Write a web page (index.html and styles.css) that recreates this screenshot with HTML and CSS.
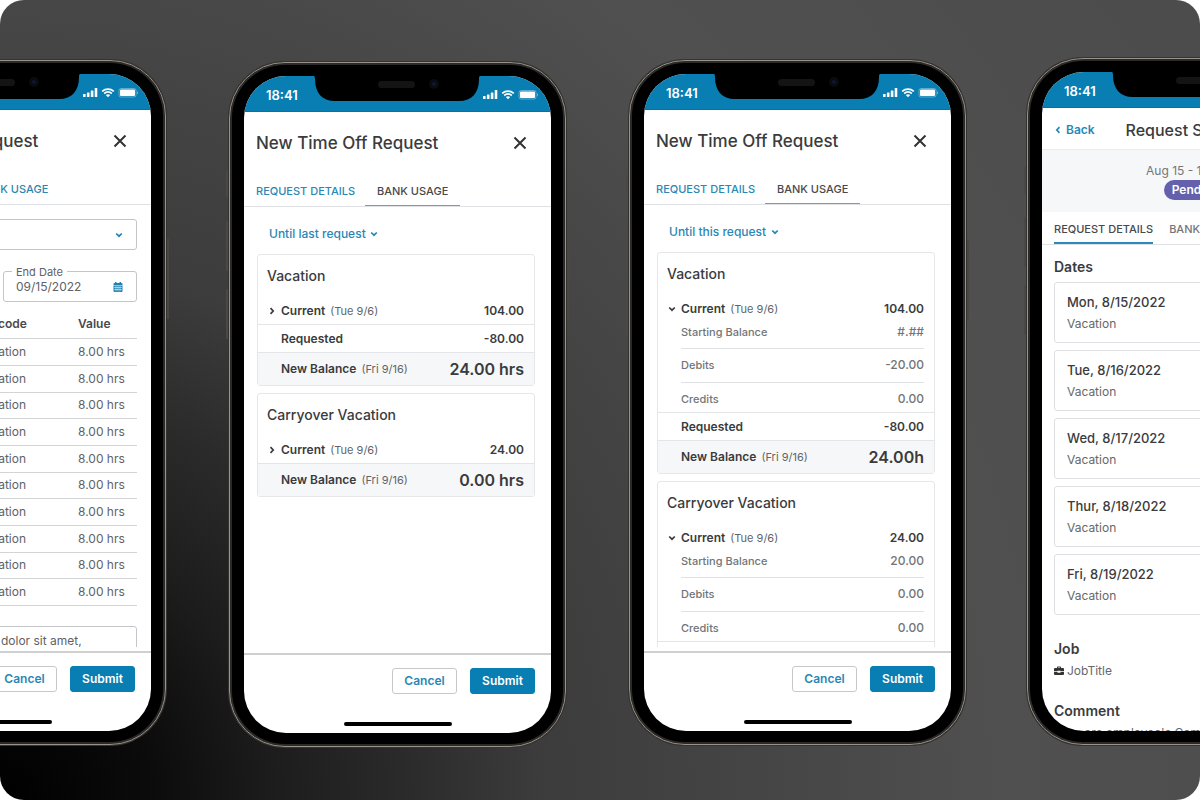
FILE: index.html
```html
<!DOCTYPE html>
<html lang="en">
<head>
<meta charset="UTF-8">
<meta name="viewport" content="width=device-width, initial-scale=1.0">
<title>Time Off Request</title>
<link rel="stylesheet" href="styles.css">
</head>
<body>

<svg class="sprite" aria-hidden="true">
  <symbol id="notch" viewBox="0 0 172 26">
    <path d="M0 0h172c-3 0-4 1-4 4 0 14-7 22-20 22H24C11 26 4 18 4 4 4 1 3 0 0 0z" fill="#000"/>
    <rect x="67" y="6" width="37" height="7" rx="3.5" fill="#141414"/>
    <circle cx="123" cy="9" r="5" fill="#0a0b10"/>
    <circle cx="123" cy="9" r="2" fill="#0d1830"/>
  </symbol>
  <symbol id="signals" viewBox="0 0 56 12">
    <g fill="#fff">
      <rect x="0" y="7" width="2.6" height="3" rx=".6"/>
      <rect x="3.9" y="5.400" width="2.600" height="4.600" rx=".6"/>
      <rect x="7.800" y="3.400" width="2.600" height="6.600" rx=".6"/>
      <rect x="11.700" y="1" width="2.600" height="9" rx=".6"/>
      <path d="M22.800 8.100q2.200-1.800 4.400 0L25 10.300z"/>
      <rect x="37" y="2.500" width="15" height="6.500" rx="1"/>
      <path d="M54.200 4.200v3c1.200-.5 1.200-2.500 0-3z" opacity=".5"/>
    </g>
    <g fill="none" stroke="#fff">
      <path d="M19.200 4.300c3.300-3 8.300-3 11.600 0M21.200 6.500c2.200-1.900 5.400-1.900 7.600 0" stroke-width="1.700"/>
      <rect x="36" y="1.500" width="17" height="8.500" rx="2" opacity=".35"/>
    </g>
  </symbol>
  <symbol id="close" viewBox="0 0 14 14">
    <path d="M1.500 1.500l11 11M12.500 1.500l-11 11" fill="none" stroke="#333" stroke-width="2"/>
  </symbol>
  <symbol id="chevron" viewBox="0 0 8 8">
    <path d="M1.200 2.500L4 5.200l2.800-2.700" fill="none" stroke="currentColor" stroke-width="1.700"/>
  </symbol>
  <symbol id="chevron-right" viewBox="0 0 8 8">
    <path d="M2.500 1.200L5.200 4 2.500 6.800" fill="none" stroke="currentColor" stroke-width="1.700"/>
  </symbol>
  <symbol id="chevron-left" viewBox="0 0 8 8">
    <path d="M5.500 1.200L2.800 4l2.700 2.800" fill="none" stroke="currentColor" stroke-width="1.700"/>
  </symbol>
  <symbol id="calendar" viewBox="0 0 10 10">
    <path d="M.5 3V2q0-1 1-1H2V0h1.500v1h3V0H8v1h.5q1 0 1 1v1z" fill="currentColor"/>
    <path d="M.5 3.500h9V9q0 1-1 1h-7q-1 0-1-1z" fill="currentColor"/>
    <path d="M1 5.500h8M1 7.600h8M3 4v5.500M5 4v5.500M7 4v5.500" stroke="#fff" stroke-width=".5"/>
  </symbol>
  <symbol id="briefcase" viewBox="0 0 10 10">
    <path d="M3 2V1.300Q3 .5 3.800.5h2.400q.8 0 .8.800V2h2q1 0 1 1v2.300H6.500v-.6h-3v.6H0V3q0-1 1-1zm1 0h2v-.5H4z" fill="#333" fill-rule="evenodd"/>
    <path d="M0 5.900h3.500v.8h3v-.8H10V8q0 1-1 1H1Q0 9 0 8z" fill="#333"/>
  </symbol>
</svg>

<main class="stage">

  <section class="phone phone-mid">
    <svg class="notch"><use href="#notch"/></svg>
    <div class="screen">
      <div class="status"><span>18:41</span><svg class="signals"><use href="#signals"/></svg></div>
      <header class="header">
        <h2>New Time Off Request</h2>
        <button class="close" aria-label="Close"><svg><use href="#close"/></svg></button>
      </header>
      <nav class="tabs">
        <button class="tab active">REQUEST DETAILS</button>
        <button class="tab">BANK USAGE</button>
      </nav>
      <div class="content form">
        <div class="field">
          <select aria-label="Request type"><option>Vacation</option></select>
          <svg class="chevron blue"><use href="#chevron"/></svg>
        </div>
        <div class="dates">
          <div class="field date">
            <label for="start">Start Date</label>
            <input id="start" type="text" value="09/06/2022">
            <svg class="calendar"><use href="#calendar"/></svg>
          </div>
          <div class="field date">
            <label for="end">End Date</label>
            <input id="end" type="text" value="09/15/2022">
            <svg class="calendar"><use href="#calendar"/></svg>
          </div>
        </div>
        <table class="days">
          <thead>
            <tr><th>Date</th><th>Paycode</th><th>Value</th></tr>
          </thead>
          <tbody>
            <tr><td>Tue, 9/6</td><td>Vacation</td><td>8.00 hrs</td></tr>
            <tr><td>Wed, 9/7</td><td>Vacation</td><td>8.00 hrs</td></tr>
            <tr><td>Thu, 9/8</td><td>Vacation</td><td>8.00 hrs</td></tr>
            <tr><td>Fri, 9/9</td><td>Vacation</td><td>8.00 hrs</td></tr>
            <tr><td>Sat, 9/10</td><td>Vacation</td><td>8.00 hrs</td></tr>
            <tr><td>Sun, 9/11</td><td>Vacation</td><td>8.00 hrs</td></tr>
            <tr><td>Mon, 9/12</td><td>Vacation</td><td>8.00 hrs</td></tr>
            <tr><td>Tue, 9/13</td><td>Vacation</td><td>8.00 hrs</td></tr>
            <tr><td>Wed, 9/14</td><td>Vacation</td><td>8.00 hrs</td></tr>
            <tr><td>Thu, 9/15</td><td>Vacation</td><td>8.00 hrs</td></tr>
          </tbody>
        </table>
        <textarea class="comment" aria-label="Comment">Reasons: Lorem ipsum dolor sit amet,</textarea>
      </div>
      <footer class="footer">
        <button class="btn">Cancel</button>
        <button class="btn primary">Submit</button>
      </footer>
      <div class="home"></div>
    </div>
  </section>

  <section class="phone phone-low">
    <svg class="notch"><use href="#notch"/></svg>
    <div class="screen">
      <div class="status"><span>18:41</span><svg class="signals"><use href="#signals"/></svg></div>
      <header class="header">
        <h2>New Time Off Request</h2>
        <button class="close" aria-label="Close"><svg><use href="#close"/></svg></button>
      </header>
      <nav class="tabs">
        <button class="tab">REQUEST DETAILS</button>
        <button class="tab active">BANK USAGE</button>
      </nav>
      <div class="content">
        <div class="range">
          <select aria-label="Range"><option>Until last request</option></select>
          <svg class="chevron"><use href="#chevron"/></svg>
        </div>
        <article class="card">
          <h3>Vacation</h3>
          <button class="row"><svg class="chevron"><use href="#chevron-right"/></svg><b>Current</b> <small>(Tue 9/6)</small><strong>104.00</strong></button>
          <div class="row line"><b>Requested</b><strong>-80.00</strong></div>
          <div class="row line total"><b>New Balance</b> <small>(Fri 9/16)</small><strong>24.00 hrs</strong></div>
        </article>
        <article class="card">
          <h3>Carryover Vacation</h3>
          <button class="row"><svg class="chevron"><use href="#chevron-right"/></svg><b>Current</b> <small>(Tue 9/6)</small><strong>24.00</strong></button>
          <div class="row line total"><b>New Balance</b> <small>(Fri 9/16)</small><strong>0.00 hrs</strong></div>
        </article>
      </div>
      <footer class="footer">
        <button class="btn">Cancel</button>
        <button class="btn primary">Submit</button>
      </footer>
      <div class="home"></div>
    </div>
  </section>

  <section class="phone phone-mid">
    <svg class="notch"><use href="#notch"/></svg>
    <div class="screen">
      <div class="status"><span>18:41</span><svg class="signals"><use href="#signals"/></svg></div>
      <header class="header">
        <h2>New Time Off Request</h2>
        <button class="close" aria-label="Close"><svg><use href="#close"/></svg></button>
      </header>
      <nav class="tabs">
        <button class="tab">REQUEST DETAILS</button>
        <button class="tab active">BANK USAGE</button>
      </nav>
      <div class="content">
        <div class="range">
          <select aria-label="Range"><option>Until this request</option></select>
          <svg class="chevron"><use href="#chevron"/></svg>
        </div>
        <article class="card">
          <h3>Vacation</h3>
          <button class="row"><svg class="chevron"><use href="#chevron"/></svg><b>Current</b> <small>(Tue 9/6)</small><strong>104.00</strong></button>
          <div class="details">
            <div class="detail"><span>Starting Balance</span><span class="num">#.##</span></div>
            <div class="detail"><span>Debits</span><span class="num">-20.00</span></div>
            <div class="detail"><span>Credits</span><span class="num">0.00</span></div>
          </div>
          <div class="row line"><b>Requested</b><strong>-80.00</strong></div>
          <div class="row line total"><b>New Balance</b> <small>(Fri 9/16)</small><strong>24.00h</strong></div>
        </article>
        <article class="card">
          <h3>Carryover Vacation</h3>
          <button class="row"><svg class="chevron"><use href="#chevron"/></svg><b>Current</b> <small>(Tue 9/6)</small><strong>24.00</strong></button>
          <div class="details">
            <div class="detail"><span>Starting Balance</span><span class="num">20.00</span></div>
            <div class="detail"><span>Debits</span><span class="num">0.00</span></div>
            <div class="detail"><span>Credits</span><span class="num">0.00</span></div>
          </div>
          <div class="row line"><b>Requested</b><strong>0.00</strong></div>
        </article>
      </div>
      <footer class="footer">
        <button class="btn">Cancel</button>
        <button class="btn primary">Submit</button>
      </footer>
      <div class="home"></div>
    </div>
  </section>

  <section class="phone phone-high">
    <svg class="notch"><use href="#notch"/></svg>
    <div class="screen">
      <div class="status"><span>18:41</span><svg class="signals"><use href="#signals"/></svg></div>
      <header class="header summary">
        <a class="back" href="#"><svg class="chevron"><use href="#chevron-left"/></svg>Back</a>
        <h2>Request Summary</h2>
      </header>
      <div class="band">
        <span>Aug 15 - 19, 2022</span>
        <span class="pill">Pending</span>
      </div>
      <nav class="tabs compact">
        <button class="tab active">REQUEST DETAILS</button>
        <button class="tab">BANK USAGE</button>
      </nav>
      <div class="content flush">
        <h4>Dates</h4>
        <ul class="day-list">
          <li><b>Mon, 8/15/2022</b><span>Vacation</span></li>
          <li><b>Tue, 8/16/2022</b><span>Vacation</span></li>
          <li><b>Wed, 8/17/2022</b><span>Vacation</span></li>
          <li><b>Thur, 8/18/2022</b><span>Vacation</span></li>
          <li><b>Fri, 8/19/2022</b><span>Vacation</span></li>
        </ul>
        <h4>Job</h4>
        <p class="job"><svg><use href="#briefcase"/></svg>JobTitle</p>
        <h4>Comment</h4>
        <p>Here are employee's Comments</p>
      </div>
    </div>
  </section>

</main>

</body>
</html>
```
FILE: styles.css
```css
* {
  box-sizing: border-box;
}
body {
  margin: 0;
  background: #fff;
  font-family: Inter, "Liberation Sans", sans-serif;
  font-size: 12px;
  line-height: 16px;
  color: #3a3b3d;
}
h2, h3, h4, p, ul {
  margin: 0;
  padding: 0;
}
button, input, select, textarea {
  font: inherit;
  color: inherit;
  background: none;
  border: 0;
  margin: 0;
  padding: 0;
}
button {
  cursor: pointer;
}
select {
  appearance: none;
}
.sprite {
  display: none;
}

.stage {
  display: flex;
  gap: 63px;
  height: 100vh;
  min-height: 700px;
  padding: 58px 0 53px;
  overflow: hidden;
  border-radius: 24px;
  background: radial-gradient(circle at 0 100%, #000 0, #0b0b0b 150px, #1c1c1c 270px, #2b2b2b 410px, #3c3c3c 540px, #474747 800px, #505050 1000px, #4c4c4c 1400px);
}

/* Phone shell */
.phone {
  position: relative;
  flex: none;
  width: 337px;
  padding: 13px 14px;
  border: 1px solid #98948c;
  border-radius: 56px;
  background: #000;
  box-shadow: 0 0 0 1px #35332f, inset 0 0 0 2px #2b2a28;
}
.phone:first-child {
  margin-left: -171px;
}
.phone-high {
  margin-left: -2px;
  margin-bottom: 2px;
}
.phone-mid {
  margin-top: 2px;
  margin-bottom: 2px;
}
.phone-low {
  margin-top: 4px;
}
/* side keys */
.phone::before, .phone::after {
  content: "";
  position: absolute;
  left: -4px;
  top: 108px;
  width: 2px;
  height: 168px;
  background: linear-gradient(#4a4845 0 26px, transparent 26px 50px, #4a4845 50px 100px, transparent 100px 118px, #4a4845 118px);
}
.phone::after {
  left: auto;
  right: -4px;
  top: 178px;
  height: 80px;
  background: #4a4845;
}
.notch {
  position: absolute;
  top: 12px;
  left: 50%;
  width: 172px;
  height: 26px;
  margin-left: -87px;
}
.screen {
  display: flex;
  flex-direction: column;
  height: 100%;
  overflow: hidden;
  border-radius: 42px;
  background: #fff;
}
.status {
  flex: none;
  display: flex;
  align-items: center;
  justify-content: space-between;
  height: 36px;
  padding: 2px 12px 0 22px;
  background: #087eb2;
  border-bottom: 1px solid #0871a0;
  color: #fff;
  font-size: 13px;
  font-weight: 600;
}
.signals {
  width: 56px;
  height: 12px;
}

/* Header and tabs */
.header {
  flex: none;
  display: flex;
  align-items: center;
  justify-content: space-between;
  height: 62px;
  padding: 0 24px 0 12px;
}
.header h2 {
  font-size: 17px;
  line-height: 24px;
  font-weight: 500;
}
.close, .close svg {
  display: block;
  width: 14px;
  height: 14px;
}
.tabs {
  flex: none;
  display: flex;
  gap: 10px;
  height: 33px;
  padding-left: 12px;
  border-bottom: 1px solid #dfe1e4;
}
.tab {
  min-width: 95px;
  padding-top: 2px;
  border-bottom: 1px solid transparent;
  font-size: 11px;
  font-weight: 500;
  color: #2a87b5;
}
.tab.active {
  border-color: #6f9fbe;
  color: #47494c;
}
.compact {
  gap: 16px;
}
.compact .tab {
  min-width: 0;
  padding-top: 3px;
  color: #737579;
}
.compact .tab.active {
  border-bottom: 2px solid #2a8abb;
  color: #47494c;
}
.content {
  flex: 1;
  min-height: 0;
  margin-bottom: 4px;
  padding: 0 16px 0 13px;
  overflow-y: auto;
  scrollbar-width: none;
}
.chevron {
  flex: none;
  width: 8px;
  height: 8px;
}

/* Bank usage */
.range {
  display: flex;
  align-items: center;
  gap: 4px;
  padding: 19px 12px 12px;
  color: #2a87b5;
  font-weight: 500;
}
.card {
  margin-bottom: 7px;
  border: 1px solid #e6e7e9;
  border-radius: 3px;
}
.card h3 {
  padding: 11px 9px;
  font-size: 14px;
  line-height: 20px;
  font-weight: 500;
}
.row {
  display: flex;
  align-items: center;
  width: 100%;
  height: 27px;
  padding: 0 10px 0 23px;
}
.row .chevron {
  margin: 0 5px 0 -13px;
}
.row b {
  font-weight: 600;
}
.row small {
  margin-left: 5px;
  font-size: 11px;
  color: #626467;
}
.row strong {
  margin-left: auto;
  font-weight: 600;
}
.line {
  height: 28px;
  border-top: 1px solid #e3e5e8;
}
.total {
  height: 33px;
  background: #f6f7f9;
}
.total strong {
  font-size: 16px;
}
.details {
  padding: 0 10px 0 23px;
}
.detail {
  display: flex;
  justify-content: space-between;
  padding: 8px 0 9px;
  border-bottom: 1px solid #e0e1e3;
  font-size: 11px;
  font-weight: 500;
  color: #727477;
}
.detail:first-child {
  padding: 2px 0 8px;
}
.detail:last-child {
  padding-bottom: 5px;
  border-bottom: 0;
}
.detail .num {
  font-size: 12px;
}

/* Request form */
.form {
  padding: 14px 14px 0 12px;
}
.field {
  position: relative;
  display: flex;
  align-items: center;
  height: 31px;
  padding: 0 13px 0 12px;
  border: 1px solid #c3c5c8;
  border-radius: 3px;
  color: #606266;
}
.field select, .field input {
  flex: 1;
  min-width: 0;
}
.blue, .calendar {
  color: #1f82b3;
}
.calendar {
  flex: none;
  width: 10px;
  height: 10px;
}
.dates {
  display: flex;
  gap: 13px;
  margin: 21px 0 9px;
}
.date {
  flex: 1;
  min-width: 0;
}
.date label {
  position: absolute;
  top: -7px;
  left: 8px;
  padding: 0 4px;
  background: #fff;
  font-size: 11px;
  line-height: 14px;
}
.days {
  width: 100%;
  border-collapse: collapse;
  table-layout: fixed;
}
.days th, .days td {
  height: 27px;
  padding: 0;
  border-bottom: 1px solid #d3d4d6;
  text-align: left;
  color: #606266;
}
.days tr:nth-child(3n) > * {
  height: 26px;
}
.days th {
  font-weight: 600;
  color: #47494c;
}
.days th:first-child {
  width: 43%;
}
.days th:last-child {
  width: 21%;
}
.comment {
  display: block;
  width: 100%;
  height: 60px;
  margin-top: 20px;
  padding: 6px 12px;
  border: 1px solid #c3c5c8;
  border-radius: 3px;
  resize: none;
  color: #606266;
}

/* Footer */
.footer {
  flex: none;
  display: flex;
  justify-content: flex-end;
  gap: 13px;
  padding: 13px 16px 28px;
  border-top: 2px solid #cfcfcf;
}
.btn {
  height: 26px;
  width: 65px;
  border: 1px solid #c6c8ca;
  border-radius: 3px;
  font-weight: 600;
  color: #2a87b5;
}
.primary {
  border-color: #087eb2;
  background: #087eb2;
  color: #fff;
}
.home {
  flex: none;
  width: 108px;
  height: 4px;
  margin: 0 auto 7px;
  border-radius: 2px;
  background: #000;
}

/* Request summary */
.summary {
  position: relative;
  justify-content: center;
  height: 41px;
  padding: 2px 0 0;
}
.summary h2 {
  font-size: 16px;
}
.back {
  position: absolute;
  left: 12px;
  display: flex;
  align-items: center;
  gap: 4px;
  color: #2a87b5;
  font-weight: 600;
  text-decoration: none;
}
.band {
  flex: none;
  display: flex;
  flex-direction: column;
  align-items: center;
  padding: 13px 0 12px;
  border-top: 1px solid #e9ebee;
  background: #f6f7f9;
  color: #74767a;
}
.pill {
  margin-top: 1px;
  padding: 2px 8px;
  border-radius: 10px;
  background: #6460ab;
  color: #fff;
  font-weight: 600;
}
.flush {
  margin-bottom: 0;
  padding-left: 12px;
}
.flush h4 {
  padding-top: 12px;
  font-size: 14px;
  line-height: 20px;
  font-weight: 600;
}
.day-list {
  display: flex;
  flex-direction: column;
  gap: 7px;
  margin: 5px 0 12px;
  list-style: none;
}
.day-list li {
  padding: 10px 12px;
  border: 1px solid #dddfe2;
  border-radius: 3px;
}
.day-list b, .day-list span {
  display: block;
}
.day-list b {
  margin-bottom: 4px;
  font-size: 13px;
  line-height: 19px;
  font-weight: 500;
}
.day-list span, .flush p {
  color: #66686b;
}
.flush p {
  padding-top: 4px;
}
.job {
  display: flex;
  align-items: center;
  gap: 3px;
  padding-bottom: 10px;
}
.job svg {
  width: 10px;
  height: 10px;
}
```
